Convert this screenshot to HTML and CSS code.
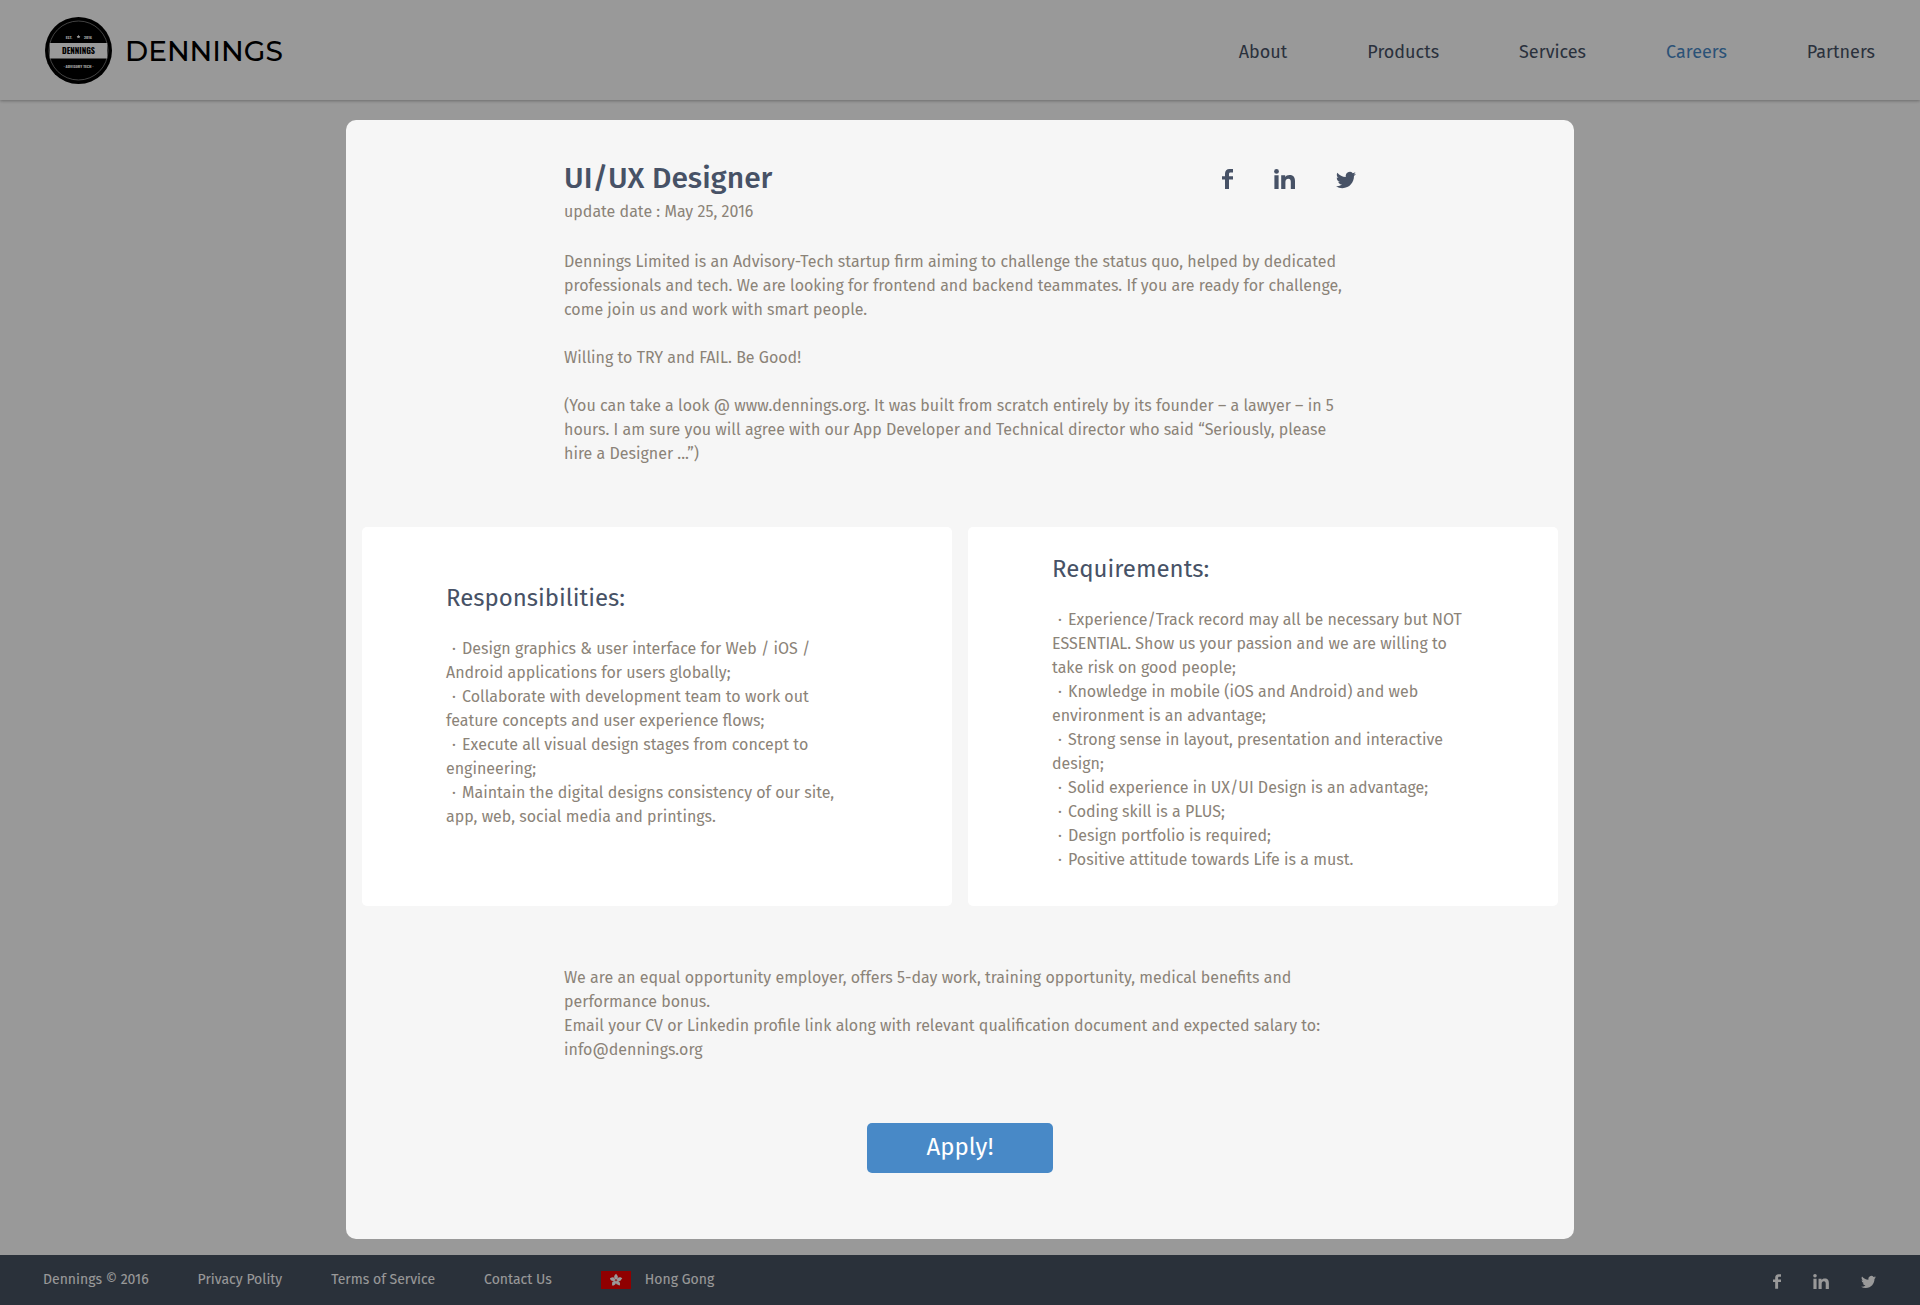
FILE: index.html
```html
<!DOCTYPE html>
<html lang="en">
<head>
<meta charset="utf-8">
<meta name="viewport" content="width=device-width, initial-scale=1">
<title>Dennings – UI/UX Designer</title>
<link rel="stylesheet" href="styles.css">
</head>
<body>
<svg class="sprite" aria-hidden="true">
  <symbol id="facebook" viewBox="0 0 11 20"><path d="M3 20V10.600H0V7.200h3V4.800C3 1.700 4.700 0 7.500 0H11v3.400H8.600C7.400 3.400 7 4 7 5v2.200h4v3.400H7V20z"/></symbol>
  <symbol id="linkedin" viewBox="0 0 21 20"><circle cx="2.500" cy="2.400" r="2.400"/><path d="M.4 6.200h4.200V20H.4zM7.200 6.200h4v1.900c.7-1.300 2.200-2.200 4.300-2.200 4.200 0 5.500 2.500 5.500 6.400V20h-4.200v-6.900c0-2-.5-3.400-2.400-3.400-2.100 0-3 1.400-3 3.400V20H7.200z"/></symbol>
  <symbol id="twitter" viewBox="0 2 24 20"><path d="M23.953 4.570a10 10 0 01-2.825.775 4.958 4.958 0 002.163-2.723c-.951.555-2.005.959-3.127 1.184a4.920 4.920 0 00-8.384 4.482C7.690 8.095 4.067 6.130 1.640 3.162a4.822 4.822 0 00-.666 2.475c0 1.710.870 3.213 2.188 4.096a4.904 4.904 0 01-2.228-.616v.060a4.923 4.923 0 003.946 4.827 4.996 4.996 0 01-2.212.085 4.936 4.936 0 004.604 3.417 9.867 9.867 0 01-6.102 2.105c-.390 0-.779-.023-1.170-.067a13.995 13.995 0 007.557 2.209c9.053 0 13.998-7.496 13.998-13.985 0-.210 0-.420-.015-.630A9.935 9.935 0 0024 4.590z"/></symbol>
</svg>

<header class="site-header">
  <a class="brand" href="#">
    <svg class="badge" viewBox="0 0 67 67" aria-hidden="true">
      <circle cx="33.500" cy="33.500" r="33.500" fill="#000"/>
      <circle cx="33.500" cy="33.500" r="29.500" fill="none" stroke="#8c8c8c" stroke-width=".8"/>
      <path d="M4.800 26h57.400v15.500H4.800z" fill="#fff"/>
      <g class="badge-text">
        <text x="24" y="21.500" class="badge-small">EST.</text>
        <text x="43" y="21.500" class="badge-small">2016</text>
        <text x="33.500" y="37" class="badge-name">DENNINGS</text>
        <text x="33.500" y="51" class="badge-small">· ADVISORY TECH ·</text>
      </g>
      <path d="M33.500 17.700l.6 1.200 1.300.2-.9.900.2 1.300-1.200-.6-1.200.6.2-1.300-.9-.9 1.300-.2z" fill="#fff"/>
    </svg>
    <span class="wordmark">DENNINGS</span>
  </a>
  <nav class="main-nav" aria-label="Main">
    <a href="#">About</a>
    <a href="#">Products</a>
    <a href="#">Services</a>
    <a href="#" class="active" aria-current="page">Careers</a>
    <a href="#">Partners</a>
  </nav>
</header>

<main class="page">
  <article class="dialog" role="dialog" aria-labelledby="job-title">
    <div class="column">
      <div class="job-head">
        <h1 id="job-title">UI/UX Designer</h1>
        <div class="social">
          <a href="#" aria-label="Facebook"><svg class="fb"><use href="#facebook"/></svg></a>
          <a href="#" aria-label="LinkedIn"><svg class="li"><use href="#linkedin"/></svg></a>
          <a href="#" aria-label="Twitter"><svg class="tw"><use href="#twitter"/></svg></a>
        </div>
      </div>
      <p class="date">update date : May 25, 2016</p>
      <div class="intro">
        <p>Dennings Limited is an Advisory-Tech startup firm aiming to challenge the status quo, helped by dedicated professionals and tech. We are looking for frontend and backend teammates. If you are ready for challenge, come join us and work with smart people.</p>
        <p>Willing to TRY and FAIL. Be Good!</p>
        <p>(You can take a look @ www.dennings.org. It was built from scratch entirely by its founder – a lawyer – in 5 hours. I am sure you will agree with our App Developer and Technical director who said “Seriously, please hire a Designer ...”)</p>
      </div>
    </div>

    <div class="cards">
      <section class="card card-duties">
        <h2>Responsibilities:</h2>
        <ul>
          <li><span class="dot">·</span>Design graphics &amp; user interface for Web / iOS / Android applications for users globally;</li>
          <li><span class="dot">·</span>Collaborate with development team to work out feature concepts and user experience flows;</li>
          <li><span class="dot">·</span>Execute all visual design stages from concept to engineering;</li>
          <li><span class="dot">·</span>Maintain the digital designs consistency of our site, app, web, social media and printings.</li>
        </ul>
      </section>
      <section class="card card-needs">
        <h2>Requirements:</h2>
        <ul>
          <li><span class="dot">·</span>Experience/Track record may all be necessary but NOT ESSENTIAL. Show us your passion and we are willing to take risk on good people;</li>
          <li><span class="dot">·</span>Knowledge in mobile (iOS and Android) and web environment is an advantage;</li>
          <li><span class="dot">·</span>Strong sense in layout, presentation and interactive design;</li>
          <li><span class="dot">·</span>Solid experience in UX/UI Design is an advantage;</li>
          <li><span class="dot">·</span>Coding skill is a PLUS;</li>
          <li><span class="dot">·</span>Design portfolio is required;</li>
          <li><span class="dot">·</span>Positive attitude towards Life is a must.</li>
        </ul>
      </section>
    </div>

    <div class="column closing">
      <p>We are an equal opportunity employer, offers 5-day work, training opportunity, medical benefits and performance bonus.</p>
      <p>Email your CV or Linkedin profile link along with relevant qualification document and expected salary to: info@dennings.org</p>
    </div>
    <button class="apply" type="button">Apply!</button>
  </article>
</main>

<footer class="site-footer">
  <nav class="footer-nav" aria-label="Footer">
    <span>Dennings © 2016</span>
    <a href="#">Privacy Polity</a>
    <a href="#">Terms of Service</a>
    <a href="#">Contact Us</a>
    <a href="#" class="region">
      <svg class="flag" viewBox="0 0 30 18" aria-hidden="true">
        <path d="M0 0h30v18H0z" fill="#f00000"/>
        <g fill="#fff" transform="translate(15 9.300)">
          <path id="petal" d="M0-.5C-2.600-2-2.400-5.500.5-6.500c-.4 1.200 1.900 1.800 1.300 3.700C1.500-1.700.8-1.200 0-.5z"/>
          <use href="#petal" transform="rotate(72)"/>
          <use href="#petal" transform="rotate(144)"/>
          <use href="#petal" transform="rotate(216)"/>
          <use href="#petal" transform="rotate(288)"/>
        </g>
      </svg>
      Hong Gong
    </a>
  </nav>
  <div class="social social-small">
    <a href="#" aria-label="Facebook"><svg class="fb"><use href="#facebook"/></svg></a>
    <a href="#" aria-label="LinkedIn"><svg class="li"><use href="#linkedin"/></svg></a>
    <a href="#" aria-label="Twitter"><svg class="tw"><use href="#twitter"/></svg></a>
  </div>
</footer>
<div class="backdrop"></div>
</body>
</html>
```

FILE: styles.css
```css
* {
  box-sizing: border-box;
}

body {
  margin: 0;
  min-height: 100vh;
  display: flex;
  flex-direction: column;
  background: #fff;
  color: #8b8378;
  font: 16px/24px "Fira Sans", "Noto Sans", sans-serif;
}

h1, h2, p, ul {
  margin: 0;
  padding: 0;
}

a {
  color: inherit;
  text-decoration: none;
}

svg {
  display: block;
  fill: currentColor;
}

.sprite {
  position: absolute;
  width: 0;
  height: 0;
}

.backdrop {
  position: fixed;
  inset: 0;
  background: rgba(0, 0, 0, .4);
}

/* Header */
.site-header {
  display: flex;
  align-items: center;
  justify-content: space-between;
  height: 100px;
  padding: 0 45px;
  box-shadow: 0 1px 3px rgba(0, 0, 0, .3);
}

.brand {
  display: flex;
  align-items: center;
  gap: 13px;
  color: #000;
}

.badge {
  width: 67px;
  height: 67px;
}

.badge-text {
  font-family: Oswald, "Liberation Sans Narrow", "DejaVu Sans Condensed", sans-serif;
  font-weight: 700;
  text-anchor: middle;
}

.badge-small {
  font-size: 4px;
  fill: #fff;
}

.badge-name {
  font-size: 8px;
  fill: #000;
}

.wordmark {
  padding-top: 2px;
  font: 500 28px/32px Montserrat, Inter, sans-serif;
}

.main-nav {
  display: flex;
  gap: 80px;
  padding-top: 4px;
  color: #475266;
  font-size: 18px;
}

.main-nav .active {
  color: #4889c7;
}

/* Job dialog */
.page {
  flex: 1;
  padding: 20px 16px 16px;
}

.dialog {
  position: relative;
  z-index: 1;
  max-width: 1228px;
  margin: 0 auto;
  padding: 36px 16px 66px;
  border-radius: 10px;
  background: #f6f6f6;
}

.column {
  max-width: 792px;
  margin: 0 auto;
}

.job-head {
  display: flex;
  align-items: center;
  justify-content: space-between;
  color: #475266;
}

h1 {
  font-size: 30px;
  font-weight: 500;
  line-height: 44px;
}

.social {
  display: flex;
  align-items: flex-end;
  gap: 41px;
  padding-top: 2px;
}

.fb {
  width: 11px;
  height: 20px;
}

.li {
  width: 21px;
  height: 20px;
}

.tw {
  width: 20px;
  height: 18px;
}

.intro {
  display: grid;
  gap: 24px;
  margin-top: 26px;
}

.cards {
  display: grid;
  grid-template-columns: 1fr 1fr;
  gap: 16px;
  margin: 61px 0 60px;
}

.card {
  padding: 24px 84px 34px;
  border-radius: 5px;
  background: #fff;
}

.card-duties {
  padding-top: 53px;
  padding-right: 96px;
}

h2 {
  margin-bottom: 21px;
  color: #475266;
  font-size: 24px;
  font-weight: 400;
  line-height: 36px;
}

ul {
  list-style: none;
}

.dot {
  display: inline-block;
  width: 16px;
  text-align: center;
}

.apply {
  display: block;
  width: 186px;
  height: 50px;
  margin: 61px auto 0;
  padding: 0 0 2px;
  border: 0;
  border-radius: 5px;
  background: #4889c7;
  color: #fff;
  font: inherit;
  font-size: 24px;
}

/* Footer */
.site-footer {
  display: flex;
  align-items: center;
  justify-content: space-between;
  height: 50px;
  padding: 0 44px 0 43px;
  background: #475262;
  color: #fff;
  font-size: 14px;
}

.footer-nav {
  display: flex;
  gap: 49px;
}

.region {
  display: flex;
  align-items: center;
  gap: 14px;
}

.flag {
  width: 30px;
  height: 18px;
}

.social-small {
  gap: 32px;
}

.social-small .fb {
  width: 8px;
  height: 15px;
}

.social-small .li {
  width: 16px;
  height: 15px;
}

.social-small .tw {
  width: 15px;
  height: 14px;
}
```
